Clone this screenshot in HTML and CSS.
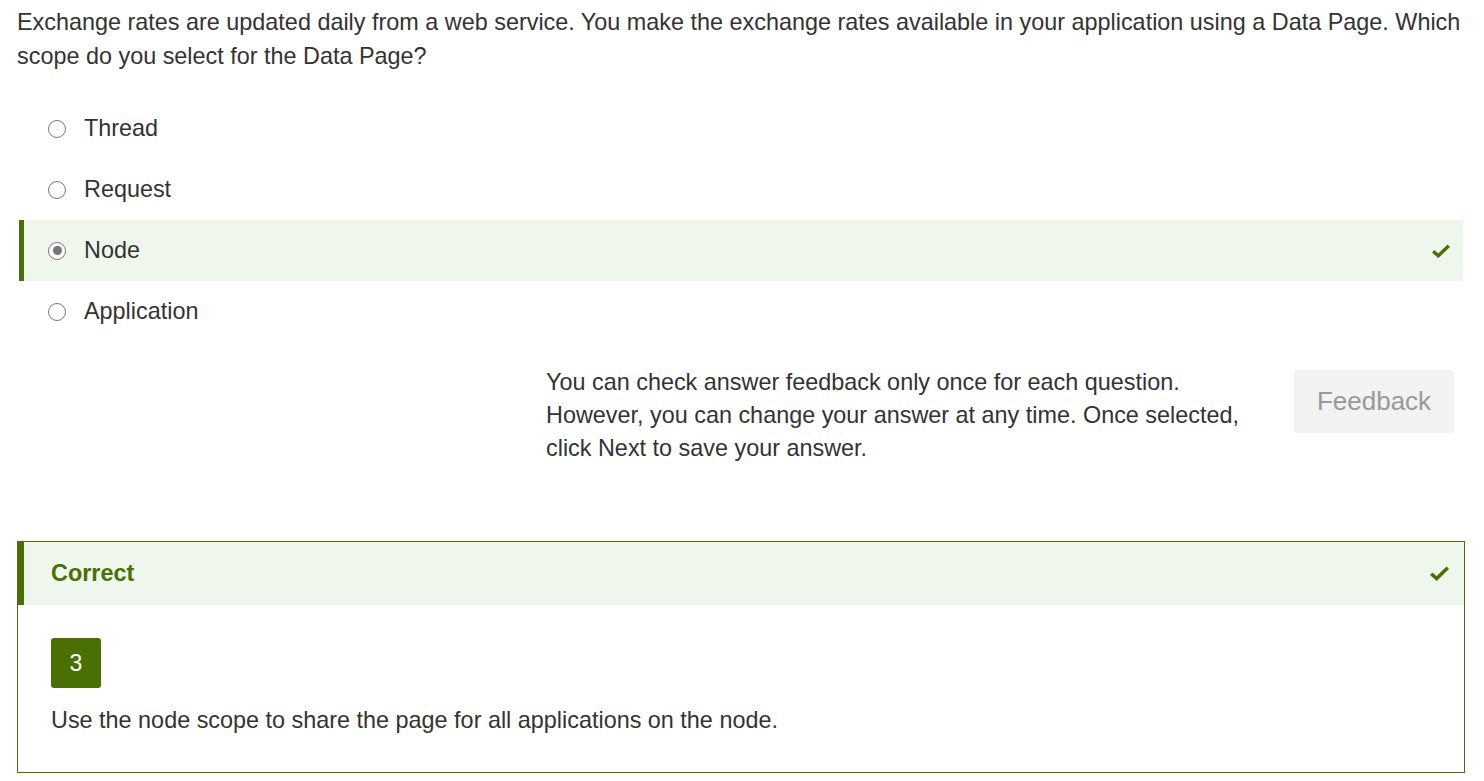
FILE: index.html
```html
<!DOCTYPE html>
<html>
<head>
<meta charset="utf-8">
<link rel="stylesheet" href="styles.css">
</head>
<body>
<div class="page">
  <p class="question">Exchange rates are updated daily from a web service. You make the exchange rates available in your application using a Data Page. Which scope do you select for the Data Page?</p>
  <ul class="options">
    <li class="option"><span class="radio"></span><span class="label">Thread</span></li>
    <li class="option"><span class="radio"></span><span class="label">Request</span></li>
    <li class="option selected"><span class="radio checked"></span><span class="label">Node</span>
      <svg class="check" viewBox="0 0 18 14" width="18" height="14"><path d="M1.2 7.2 L6.3 11.8 L16.8 1.8" fill="none" stroke="#4a7005" stroke-width="3.4"/></svg>
    </li>
    <li class="option"><span class="radio"></span><span class="label">Application</span></li>
  </ul>
  <div class="feedback-row">
    <p class="feedback-note">You can check answer feedback only once for each question. However, you can change your answer at any time. Once selected, click Next to save your answer.</p>
    <button class="feedback-btn">Feedback</button>
  </div>
  <div class="result">
    <div class="result-head">
      <span class="result-title">Correct</span>
      <svg class="check" viewBox="0 0 19 15" width="19" height="15"><path d="M1.2 7.8 L6.6 12.6 L17.8 1.8" fill="none" stroke="#4a7005" stroke-width="3.5"/></svg>
    </div>
    <div class="result-body">
      <div class="badge">3</div>
      <p class="explain">Use the node scope to share the page for all applications on the node.</p>
    </div>
  </div>
</div>
</body>
</html>
```
FILE: styles.css
```css
html, body {
  margin: 0;
  padding: 0;
  background: #fff;
}
body {
  font-family: "Liberation Sans", Arial, sans-serif;
  color: #333;
}
.page {
  padding: 5px 19px 0 17px;
}
.question {
  margin: 0;
  font-size: 23.4px;
  line-height: 34px;
}
.options {
  list-style: none;
  margin: 25px 2px 0 2px;
  padding: 0;
}
.option {
  display: flex;
  align-items: center;
  height: 61px;
  padding-left: 24px;
  padding-right: 13px;
  font-size: 23.4px;
  border-left: 5px solid transparent;
}
.option.selected {
  background: #eff6ec;
  border-left-color: #4a7005;
}
.radio {
  width: 18px;
  height: 18px;
  border: 1.5px solid #777;
  border-radius: 50%;
  box-sizing: border-box;
  margin-right: 18px;
  display: inline-flex;
  align-items: center;
  justify-content: center;
  background: #fff;
  flex: none;
}
.radio.checked::after {
  content: "";
  width: 9px;
  height: 9px;
  border-radius: 50%;
  background: #777;
}
.label {
  flex: 1;
}
.feedback-row {
  display: flex;
  justify-content: flex-end;
  align-items: flex-start;
  margin-top: 24px;
  padding-right: 11px;
}
.feedback-note {
  margin: 0;
  width: 725px;
  font-size: 23.4px;
  line-height: 33px;
}
.feedback-btn {
  margin-top: 4px;
  margin-left: 23px;
  width: 160px;
  height: 63px;
  border: none;
  border-radius: 3px;
  background: #f2f2f2;
  color: #999;
  font-family: "Liberation Sans", Arial, sans-serif;
  font-size: 26px;
  flex: none;
}
.result {
  margin-top: 76px;
  border: 1px solid #4a7005;
  width: 1448px;
  box-sizing: border-box;
}
.result-head {
  display: flex;
  align-items: center;
  justify-content: space-between;
  height: 63px;
  background: #eff6ec;
  border-left: 6px solid #4a7005;
  padding: 0 15px 0 27px;
}
.result-title {
  font-weight: bold;
  font-size: 23.4px;
  color: #4a7005;
}
.result-body {
  padding: 33px 33px 37px;
}
.badge {
  width: 50px;
  height: 50px;
  border-radius: 3px;
  background: #4a7005;
  color: #fff;
  font-size: 23px;
  display: flex;
  align-items: center;
  justify-content: center;
}
.explain {
  margin: 17px 0 0;
  font-size: 23.4px;
  line-height: 30px;
}
```
